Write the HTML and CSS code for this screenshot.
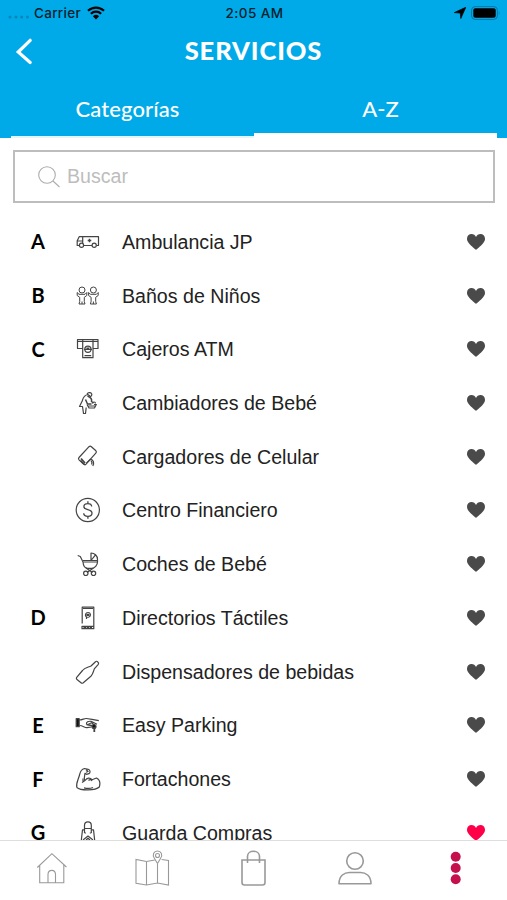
FILE: index.html
```
<!DOCTYPE html>
<html lang="es">
<head>
    <meta charset="UTF-8">
    <meta name="viewport" content="width=device-width, initial-scale=1.0">
    <title>Servicios</title>
    <link rel="stylesheet" href="styles.css">
</head>
<body>
    <svg class="defs">
        <symbol id="heart" viewBox="0 0 18 16">
            <path d="M9 15.800C8 15 4.500 12.300 2.300 9.700C.5 7.700 0 6.300 0 4.700C0 2 2 .1 4.600 .1C6.500 .1 8.200 1.200 9 2.900C9.800 1.200 11.500 .1 13.400 .1C16 .1 18 2 18 4.700C18 6.300 17.500 7.700 15.700 9.700C13.500 12.300 10 15 9 15.800Z"/>
        </symbol>
    </svg>

    <header class="header">
        <div class="status">
            <div class="status-left">
                <svg class="signal" width="22" height="4" viewBox="0 0 22 4"><circle cx="2" cy="2" r="1.500"/><circle cx="8" cy="2" r="1.500"/><circle cx="13.700" cy="2" r="1.500"/><circle cx="19.500" cy="2" r="1.500"/></svg>
                <span class="carrier">Carrier</span>
                <svg width="18" height="14" viewBox="0 0 18 14">
                    <path d="M1 4.800A11.500 11.500 0 0 1 17 4.800M3.900 7.800A7.200 7.200 0 0 1 14.100 7.800" fill="none" stroke="#000" stroke-width="2.200"/>
                    <path d="M9 13.500L5.900 10.200A4.500 4.500 0 0 1 12.100 10.200Z"/>
                </svg>
            </div>
            <span class="clock">2:05 AM</span>
            <div class="status-right">
                <svg width="12" height="12" viewBox="0 0 12 12"><path d="M11.800 .3L6.800 11.500L6.300 6.100L.3 5.600Z" stroke="#000" stroke-width=".7" stroke-linejoin="round"/></svg>
                <svg width="30" height="14" viewBox="0 0 30 14">
                    <rect x=".6" y=".6" width="25.800" height="12.800" rx="3.500" fill="none" stroke="#0573a0" stroke-width="1"/>
                    <rect x="2.300" y="2.300" width="22.400" height="9.400" rx="2"/>
                    <path d="M27.800 4.800Q29.500 7 27.800 9.200Z" fill="#0573a0"/>
                </svg>
            </div>
        </div>
        <div class="title-bar">
            <svg class="back" width="18" height="28" viewBox="0 0 18 28"><path d="M15.200 2.300L3.200 14L15.200 24.500" fill="none" stroke="#fff" stroke-width="3.200" stroke-linecap="round"/></svg>
            <h1>SERVICIOS</h1>
        </div>
        <nav class="tabs">
            <a class="tab">Categorías</a>
            <a class="tab active">A-Z</a>
        </nav>
    </header>

    <main class="content">
        <div class="search">
            <svg width="24" height="24" viewBox="0 0 24 24" fill="none" stroke="#adadad" stroke-width="1.100"><circle cx="10" cy="10" r="8.300"/><path d="M16 16L22.500 22"/></svg>
            <span>Buscar</span>
        </div>

        <ul class="list">
            <li class="row">
                <b class="letter">A</b>
                <svg class="icon" viewBox="0 0 28 28">
                    <path d="M5 17.500H3.200V12.800L5.200 8.700H24.500V17.500H22.500M18 17.500H9.800M8.700 8.700V13H3.500M8.700 13V15.500"/>
                    <circle cx="7.500" cy="17.300" r="2.100"/><circle cx="20.200" cy="17.300" r="2.100"/>
                    <path d="M15.500 10.700V14.300M13.700 12.500H17.300" stroke-width="1.400"/>
                </svg>
                <span class="name">Ambulancia JP</span>
                <svg class="heart"><use href="#heart"/></svg>
            </li>
            <li class="row">
                <b class="letter">B</b>
                <svg class="icon thin" viewBox="0 0 28 28">
                    <circle cx="8" cy="8" r="3"/><circle cx="19.400" cy="8" r="3"/>
                    <path d="M3.200 10.500V13.500L5.700 15.300V19.500L5 22H11L10.300 19.500V15.300L12.800 13.500V10.500M3.200 10.500L5 12.300H11L12.800 10.500M8 19.500V22"/>
                    <path d="M14.600 10.500V13.500L17.100 15.300V19.500L16.400 22H22.400L21.700 19.500V15.300L24.200 13.500V10.500M14.600 10.500L16.400 12.300H22.400L24.200 10.500M19.400 19.500V22"/>
                </svg>
                <span class="name">Baños de Niños</span>
                <svg class="heart"><use href="#heart"/></svg>
            </li>
            <li class="row">
                <b class="letter">C</b>
                <svg class="icon" viewBox="0 0 28 28">
                    <path d="M8.500 13.500H3.500V4.700H24V13.500H19M3.500 6.500H24" />
                    <path d="M8.700 4.700V22.700H19V4.700M10.500 20.700H17.200"/>
                    <circle cx="13.900" cy="14.300" r="3.100"/><path d="M10 14.300H18M12.500 13.200H15.200"/>
                </svg>
                <span class="name">Cajeros ATM</span>
                <svg class="heart"><use href="#heart"/></svg>
            </li>
            <li class="row">
                <b class="letter"></b>
                <svg class="icon" viewBox="0 0 28 28">
                    <path d="M13 5C14 3.500 16.500 3 17.500 4.500C18.300 6 17.500 7.500 16 7.700M13 5L16 7M14 5.500C10 6 9 9 8.200 12L5.500 17.500H8.500L9.500 24.500H11.500L12.200 18.500"/>
                    <path d="M13.500 7C17.500 8.500 18 10.500 17.500 12.500L19.500 14M11.500 10.500L13.500 15L17.500 15" stroke-width="1.500"/>
                    <path d="M13 15.500L15 19H20.500L22.300 15.500L20 15.500M14.500 17H21.500M18.500 14.500A1.500 1.500 0 0 1 21.500 14.500"/>
                </svg>
                <span class="name">Cambiadores de Bebé</span>
                <svg class="heart"><use href="#heart"/></svg>
            </li>
            <li class="row">
                <b class="letter"></b>
                <svg class="icon" viewBox="0 0 28 28">
                    <path d="M5 14.500L15 3.700Q16.200 2.600 17.400 3.700L21.900 7.800Q23 9 21.800 10.200L12 21.200Q10.800 22.300 9.700 21.200L5 16.900Q4 15.700 5 14.500Z"/>
                    <path d="M7 15.500L11 20" stroke-width="1.800"/>
                    <path d="M6.500 17.500L10.300 21.200" stroke-width="1.600"/>
                    <path d="M12.500 20L16.500 16.300C19.500 16.500 20.500 20 18.800 23M17 18C18.500 19 18.200 20 17.600 21.500"/>
                </svg>
                <span class="name">Cargadores de Celular</span>
                <svg class="heart"><use href="#heart"/></svg>
            </li>
            <li class="row">
                <b class="letter"></b>
                <svg class="icon" viewBox="0 0 28 28">
                    <circle cx="13.800" cy="14" r="11.600"/>
                    <path d="M17.700 10.500C17.500 8.600 15.900 7.700 13.800 7.700C11.500 7.700 9.900 8.900 9.900 10.700C9.900 14.700 18 12.500 18 17C18 19 16.200 20.300 13.900 20.300C11.500 20.300 9.800 19.300 9.700 17.200M13.900 5.300V7.700M13.900 20.300V22.700" stroke-width="1.300"/>
                </svg>
                <span class="name">Centro Financiero</span>
                <svg class="heart"><use href="#heart"/></svg>
            </li>
            <li class="row">
                <b class="letter"></b>
                <svg class="icon" viewBox="0 0 28 28">
                    <path d="M3.700 5.500L6.300 6.500L9 12H23.500C23.500 14.700 21 18.200 18 18.400H13.500C10.500 18 9.200 15 9 12M9 10.500H23.500V12"/>
                    <path d="M17 10.500V3C20.500 3 23.500 5.500 23.500 9.500V10.500M17 10.500L21.500 4.800M12 18L18.500 22.500M19.500 18L13 22.500"/>
                    <circle cx="11.800" cy="23.300" r="2.200"/><circle cx="19.500" cy="23.300" r="2.200"/>
                </svg>
                <span class="name">Coches de Bebé</span>
                <svg class="heart"><use href="#heart"/></svg>
            </li>
            <li class="row">
                <b class="letter">D</b>
                <svg class="icon" viewBox="0 0 28 28">
                    <path d="M8.200 19.500V3.200H19.800V24.700H8V22.300H19.800M9 4.500H19"/>
                    <path d="M9.500 23.500H18" stroke-width="1.800" stroke-dasharray="2.500 .6"/>
                    <path d="M12.500 15V13C10.500 11.500 11.500 8.500 14 8.500C16.800 8.500 17.300 12 15 13L13.300 13.300M13 11.500V10.300H14.800V11.500Z"/>
                </svg>
                <span class="name">Directorios Táctiles</span>
                <svg class="heart"><use href="#heart"/></svg>
            </li>
            <li class="row">
                <b class="letter"></b>
                <svg class="icon" viewBox="0 0 28 28">
                    <path d="M2.500 19.700L8.500 12.500C10.500 9.800 13.500 9.500 17 8L21.500 3.700Q22.500 2.700 23.800 4Q25.200 5.200 24.300 6.300L20.300 10.800C19.300 14.500 18.500 17 16 19L9 25Q8 25.600 7 24.700L3 21.500Q2 20.700 2.500 19.700Z"/>
                </svg>
                <span class="name">Dispensadores de bebidas</span>
                <svg class="heart"><use href="#heart"/></svg>
            </li>
            <li class="row">
                <b class="letter">E</b>
                <svg class="icon" viewBox="0 0 28 28">
                    <path d="M2.200 7.700H5.200V15.700H2.200Z" fill="#111"/>
                    <path d="M5.500 9C9 8.800 10 7.300 12.500 7.500L18 8.300L24.800 9.700M5.500 14.500C9 14.500 10.500 17 13 16.700L17.500 16M12.500 13.500C12 11 14.500 10 17 10.300L23 13.300M14 13.500L17.500 11.800L20.500 14"/>
                    <path d="M12.500 13.600L18.500 14.800" stroke-width="1.500"/>
                    <circle cx="20" cy="15.500" r="2" fill="#111"/><path d="M20.300 16V21" stroke-width="1.800"/>
                </svg>
                <span class="name">Easy Parking</span>
                <svg class="heart"><use href="#heart"/></svg>
            </li>
            <li class="row">
                <b class="letter">F</b>
                <svg class="icon" viewBox="0 0 28 28">
                    <path d="M2.800 22.500C1.800 18 4.500 14.500 5.500 10C6.200 6.500 8 4 10.500 3.500L14.200 4.300C16.500 5 16.500 7.700 15 8.700L12.500 9.300L11 8.300C10.500 11 10 13 10.500 15.300"/>
                    <path d="M12 4.500L14 6.500L12 7.300M8 17.500L11 15.500C13 12.500 16 12.300 18 14.700L22.500 13C25.500 14.500 26.500 18 25.300 22C21.500 25.500 7 26 2.800 22.500M9 13.500V17M14.500 15.500C16 14.200 17 14.500 18 16M10 22.800C13 23.600 16.500 23.500 19 22.500"/>
                </svg>
                <span class="name">Fortachones</span>
                <svg class="heart"><use href="#heart"/></svg>
            </li>
            <li class="row">
                <b class="letter">G</b>
                <svg class="icon" viewBox="0 0 28 28">
                    <path d="M10.500 14V6.500C10.500 1.700 17.300 1.700 17.300 6.500V14M10.500 9.500H17.300"/>
                    <path d="M10.500 10.800H8.500L7 24H21L19.500 10.800H17.300M9 21L14 17L19 21M12 21L14 19.300L16 21M10.500 14H12M15.800 14H17.300"/>
                </svg>
                <span class="name">Guarda Compras</span>
                <svg class="heart liked"><use href="#heart"/></svg>
            </li>
        </ul>
    </main>

    <nav class="bottom">
        <a class="item">
            <svg width="36" height="40" viewBox="0 0 36 40"><path d="M4.300 20.500L18.900 6.700L33.400 20M6.700 18.500V35.700H30.800V18M15 35.700V27.500C15 22 22.500 22 22.500 27.500V35.700"/></svg>
        </a>
        <a class="item">
            <svg width="36" height="40" viewBox="0 0 36 40"><path d="M20.800 13L12.500 14.500L2 12.500V36.300L12.500 38L23.500 36L34.500 38V13.500L27.700 12.500M12.500 14.500V38M23.500 17V36"/><path d="M23.500 16.500L20.500 11.500C17.800 7.500 20 4 23.500 4C27 4 29.200 7.500 26.500 11.500Z"/><circle cx="23.500" cy="8.500" r="2"/></svg>
        </a>
        <a class="item">
            <svg class="thick" width="36" height="40" viewBox="0 0 36 40"><path d="M6 13H29V35.500Q29 38 26.500 38H8.500Q6 38 6 35.500ZM11.500 16V9.500C11.500 2.500 23.500 2.500 23.500 9.500V16"/></svg>
        </a>
        <a class="item">
            <svg class="thick" width="36" height="40" viewBox="0 0 36 40"><circle cx="18" cy="14" r="8.300"/><path d="M2 36.700C2 28.500 7.500 25.500 12.500 25.500H23.500C28.500 25.500 34 28.500 34 36.700Z" stroke-linejoin="round"/></svg>
        </a>
        <a class="item">
            <svg class="more" width="36" height="40" viewBox="0 0 36 40"><circle cx="17.700" cy="9.700" r="5"/><circle cx="17.700" cy="21" r="5"/><circle cx="17.700" cy="32.300" r="5"/></svg>
        </a>
    </nav>
</body>
</html>
```

FILE: styles.css
```
* {
    box-sizing: border-box;
}

body {
    margin: 0;
    height: 900px;
    display: flex;
    flex-direction: column;
    overflow: hidden;
    background-color: #fff;
    font-family: "Liberation Sans", Arial, sans-serif;
    color: #222;
}

svg {
    display: block;
    flex-shrink: 0;
}

.defs {
    display: none;
}

.header {
    height: 138px;
    flex-shrink: 0;
    background-color: #00aae8;
    color: #fff;
}

.status {
    display: grid;
    grid-template-columns: 1fr auto 1fr;
    align-items: center;
    height: 26px;
    padding: 0 6px 0 8px;
    color: #07212d;
    font-family: Inter, sans-serif;
    font-size: 13.5px;
    font-weight: 500;
}

.status-left, .status-right {
    display: flex;
    align-items: center;
}

.status-right {
    justify-content: flex-end;
    gap: 5px;
}

.signal {
    margin-top: 8px;
    fill: #0b86b5;
}

.carrier {
    margin: 0 6px 0 4px;
    letter-spacing: 0.3px;
}

.clock {
    letter-spacing: 0.4px;
}

.title-bar {
    display: grid;
    grid-template-columns: 40px 1fr 40px;
    align-items: center;
    height: 50px;
}

.back {
    margin: 2px 0 0 15px;
}

.title-bar h1 {
    margin: 0 0 2px;
    text-align: center;
    font-family: Lato, sans-serif;
    font-size: 25.5px;
    font-weight: 900;
    letter-spacing: 0.9px;
}

.tabs {
    display: flex;
    height: 62px;
    padding: 0 10px 0 11px;
}

.tab {
    flex: 1;
    padding: 19px 10px 0 0;
    border-bottom: 2px solid #e2f6fe;
    text-align: center;
    font-family: Lato, sans-serif;
    font-size: 22px;
    font-weight: 500;
    line-height: 28px;
    letter-spacing: 0.1px;
}

.tab.active {
    padding: 19px 0 0 10px;
    border-bottom: 5px solid #fff;
}

.content {
    flex: 1;
    min-height: 0;
    overflow: hidden;
    padding-top: 12px;
}

.search {
    display: flex;
    align-items: center;
    gap: 6px;
    height: 53px;
    margin: 0 12px 0 13px;
    padding-left: 22px;
    border: 2px solid #bdbdbd;
    color: #bdbdbd;
    font-size: 19.6px;
}

.list {
    margin: 12px 0 0;
    padding: 0;
    list-style: none;
}

.row {
    display: flex;
    align-items: center;
    height: 53.73px;
    padding: 0 22px 0 24px;
}

.letter {
    width: 28px;
    margin: 0 22px 1px 0;
    text-align: center;
    font-family: Lato, sans-serif;
    font-size: 20px;
    font-weight: 700;
    color: #000;
}

.icon {
    width: 28px;
    height: 28px;
    margin-right: 20px;
    fill: none;
    stroke: #444;
    stroke-width: 1.2;
    stroke-linejoin: round;
}

.icon.thin {
    stroke-width: 1;
}

.name {
    flex: 1;
    padding-top: 1px;
    font-size: 19.6px;
}

.heart {
    width: 18px;
    height: 16px;
    fill: #4a4a4a;
}

.heart.liked {
    fill: #ff0048;
}

.bottom {
    display: flex;
    flex-shrink: 0;
    height: 60px;
    padding-top: 6px;
    border-top: 1px solid #dedede;
    background-color: #fff;
}

.item {
    flex: 1;
    display: flex;
    justify-content: center;
}

.item svg {
    fill: none;
    stroke: #999;
    stroke-width: 1.1;
}

.item svg.thick {
    stroke-width: 1.6;
}

.item svg.more {
    fill: #c5104d;
    stroke: none;
}
```
